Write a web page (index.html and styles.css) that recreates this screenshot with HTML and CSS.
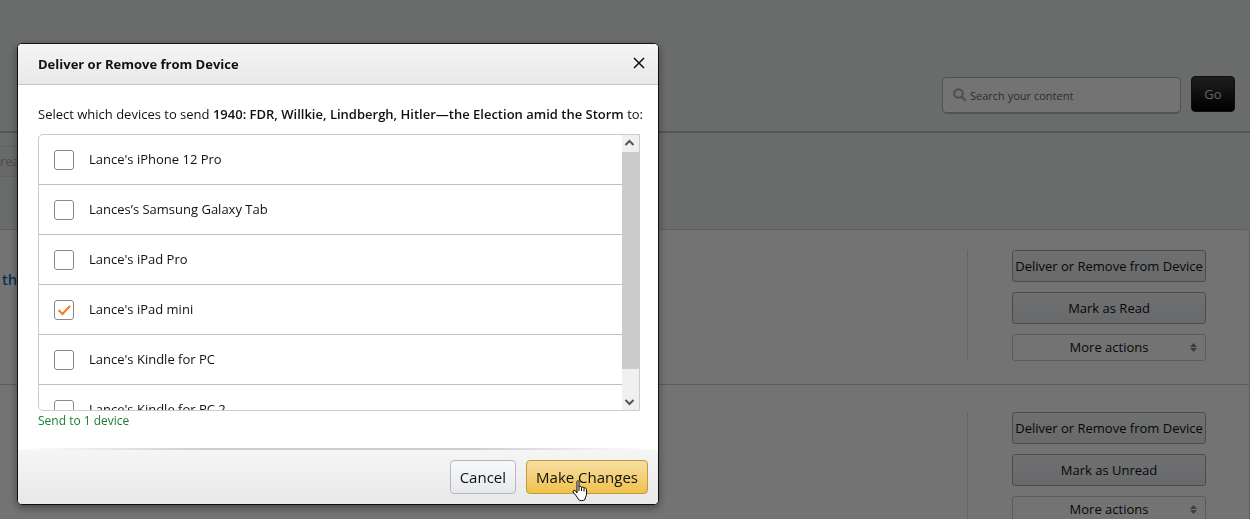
FILE: index.html
```html
<!DOCTYPE html>
<html lang="en">
	<head>
		<meta charset="utf-8">
		<title>Manage Your Content and Devices</title>
		<link rel="stylesheet" href="styles.css">
	</head>
	<body>
		<div class="page">
			<header class="topbar">
				<form class="search">
					<label class="field">
						<svg class="glass" viewBox="0 0 14 14" width="14" height="14"><circle cx="5.5" cy="5.5" r="4.3"/><path d="M8.8 8.8L12.8 12.8"/></svg>
						<input type="search" placeholder="Search your content" aria-label="Search your content">
					</label>
					<button class="go" type="button">Go</button>
				</form>
			</header>
			<div class="filters">
				<button class="filter" type="button">rea</button>
			</div>
			<main class="content">
				<div class="item">
					<a class="book" href="#">th</a>
					<div class="actions">
						<button class="action" type="button">Deliver or Remove from Device</button>
						<button class="action" type="button">Mark as Read</button>
						<label class="more">
							<select aria-label="More actions"><option>More actions</option></select>
							<svg class="updown" viewBox="0 0 7 9" width="7" height="9"><path d="M0 4L3.5 0L7 4zM0 5L3.5 9L7 5z"/></svg>
						</label>
					</div>
				</div>
				<div class="item">
					<div class="actions">
						<button class="action" type="button">Deliver or Remove from Device</button>
						<button class="action" type="button">Mark as Unread</button>
						<label class="more">
							<select aria-label="More actions"><option>More actions</option></select>
							<svg class="updown" viewBox="0 0 7 9" width="7" height="9"><path d="M0 4L3.5 0L7 4zM0 5L3.5 9L7 5z"/></svg>
						</label>
					</div>
				</div>
			</main>
		</div>

		<div class="backdrop">
			<section class="modal" role="dialog" aria-labelledby="modal-title">
				<header class="modal-head">
					<h1 id="modal-title">Deliver or Remove from Device</h1>
					<button class="close" type="button" aria-label="Close">
						<svg viewBox="0 0 12 12" width="12" height="12"><path d="M1 1L11 11M11 1L1 11"/></svg>
					</button>
				</header>
				<div class="modal-body">
					<p class="intro">Select which devices to send <b>1940: FDR, Willkie, Lindbergh, Hitler—the Election amid the Storm</b> to:</p>
					<div class="devices">
						<ul>
							<li><label><input type="checkbox">Lance's iPhone 12 Pro</label></li>
							<li><label><input type="checkbox">Lances’s Samsung Galaxy Tab</label></li>
							<li><label><input type="checkbox">Lance's iPad Pro</label></li>
							<li><label><input type="checkbox" checked>Lance's iPad mini</label></li>
							<li><label><input type="checkbox">Lance's Kindle for PC</label></li>
							<li><label><input type="checkbox">Lance's Kindle for PC 2</label></li>
						</ul>
						<div class="scrollbar">
							<svg viewBox="0 0 17 17" width="17" height="17"><path d="M3.500 10L7.500 6L11.500 10"/></svg>
							<div class="track"><div class="thumb"></div></div>
							<svg viewBox="0 0 17 17" width="17" height="17"><path d="M3.500 7L7.500 11L11.500 7"/></svg>
						</div>
					</div>
					<p class="status">Send to 1 device</p>
				</div>
				<footer class="modal-foot">
					<button class="btn" type="button">Cancel</button>
					<button class="btn primary" type="button">Make Changes
						<svg class="hand" viewBox="0 0 17 22" width="17" height="22"><path d="M5 1.500C5 .5 7 .5 7 1.500V7C7 6 9.500 6 9.500 7.500C10 6.700 12 7 12 8.300C12.500 7.500 14.500 8 14.500 9.500V14C14.500 16 13 17.500 13 19.500C11 21 8 21 6.500 19.500C5.500 17 3 14.500 1 12C.6 10.500 2.500 10 3.500 10.800L5 13z"/><path d="M7 7V11M9.500 7.500V11M12 8.500V11.500"/></svg>
					</button>
				</footer>
			</section>
		</div>
	</body>
</html>
```

FILE: styles.css
```css
*
{
	box-sizing: border-box;
}
body
{
	margin: 0;
	font: 13px/19px "Open Sans", "Noto Sans", sans-serif;
	color: #111;
	background: #fff;
}
button, input, select
{
	font: inherit;
	color: inherit;
}
svg
{
	display: block;
	fill: none;
}
.page
{
	height: 100vh;
	overflow: hidden;
	background: #eaeded;
}
.topbar
{
	padding: 76px 15px 17px;
	border-bottom: 2px solid #bbbfbf;
}
.search
{
	display: flex;
	align-items: flex-end;
	justify-content: flex-end;
	gap: 10px;
}
.field
{
	display: flex;
	align-items: center;
	gap: 3px;
	width: 239px;
	height: 37px;
	margin-top: 1px;
	padding: 0 10px;
	background: #fff;
	border: 1px solid #b4b8b8;
	border-bottom-width: 2px;
	border-radius: 5px;
}
.field input
{
	flex: 1;
	min-width: 0;
	padding: 0;
	border: 0;
	outline: 0;
	background: none;
	font-size: 11px;
}
.field input::placeholder
{
	color: #666;
}
.glass
{
	stroke: #aaa;
	stroke-width: 2;
}
.go
{
	align-self: flex-start;
	width: 44px;
	height: 36px;
	padding: 0;
	color: #ddd;
	background: linear-gradient(#444, #000);
	border: 1px solid #222;
	border-radius: 4px;
}
.filters
{
	padding: 13px 0 52px;
}
.filter
{
	display: block;
	width: 120px;
	height: 31px;
	padding: 0;
	text-align: left;
	color: #aaa;
	background: linear-gradient(#eaeded, #e2e5e8);
	border: solid #d5d9d9;
	border-width: 1px 0;
}
.content
{
	background: #fff;
	border: 1px solid #cdd2d2;
	border-left: 0;
	border-radius: 0 5px 0 0;
}
.item
{
	display: flex;
	padding: 20px 43px 23px 2px;
	border-bottom: 1px solid #ccc;
}
.item + .item
{
	padding-top: 27px;
}
.book
{
	align-self: flex-start;
	margin-top: 20px;
	font-family: "Noto Sans", sans-serif;
	font-size: 15px;
	font-weight: 500;
	color: #0066c0;
	text-decoration: none;
}
.actions
{
	display: flex;
	flex-direction: column;
	gap: 10px;
	width: 239px;
	margin-left: auto;
	padding-left: 44px;
	border-left: 1px solid #ddd;
}
.action
{
	height: 32px;
	padding: 0;
	white-space: nowrap;
	background: linear-gradient(#f7f8fa, #e7e9ec);
	border: 1px solid #a2a6ac;
	border-radius: 3px;
}
.more
{
	display: grid;
	align-items: center;
}
.more select
{
	grid-area: 1 / 1;
	appearance: none;
	height: 27px;
	padding: 0;
	text-align-last: center;
	background: #fff;
	border: 1px solid #ccc;
	border-radius: 3px;
}
.updown
{
	grid-area: 1 / 1;
	justify-self: end;
	margin-right: 9px;
	fill: #888;
	pointer-events: none;
}

.backdrop
{
	position: fixed;
	inset: 0;
	padding: 43px 17px 14px;
	overflow: hidden;
	background: rgba(0,0,0,.55);
}
.modal
{
	max-width: 642px;
	overflow: hidden;
	background: #fff;
	border: 1px solid #111;
	border-radius: 5px;
	box-shadow: 0 3px 8px rgba(0,0,0,.4);
}
.modal-head
{
	display: flex;
	align-items: center;
	justify-content: space-between;
	height: 41px;
	padding: 0 13px 0 20px;
	background: linear-gradient(#f5f5f5, #e8e8e8);
	border-bottom: 1px solid #c4c4c4;
}
.modal-head h1
{
	margin: 0;
	font-size: 13px;
	line-height: 19px;
}
.close
{
	padding: 0 0 3px;
	background: none;
	border: 0;
}
.close svg
{
	stroke: #111;
	stroke-width: 1.5;
}
.modal-body
{
	padding: 20px 18px 18px 20px;
}
.intro
{
	margin: 0 0 10px;
	white-space: nowrap;
}
.intro b
{
	font-weight: 600;
}
.devices
{
	display: flex;
	height: 277px;
	overflow: hidden;
	border: 1px solid #ccc;
	border-radius: 5px 0 0 5px;
}
.devices ul
{
	flex: 1;
	margin: 0;
	padding: 0;
	overflow: hidden;
	list-style: none;
}
.devices li
{
	border-bottom: 1px solid #c0c0c0;
}
.devices label
{
	display: flex;
	align-items: center;
	gap: 15px;
	height: 49px;
	padding-left: 15px;
}
.devices input
{
	appearance: none;
	width: 20px;
	height: 20px;
	margin: 0;
	background: #fff;
	border: 1px solid #888;
	border-radius: 3px;
}
.devices input:checked
{
	background: url("data:image/svg+xml,%3Csvg xmlns='http://www.w3.org/2000/svg' viewBox='0 0 18 18'%3E%3Cpath d='M3.500 9L7.500 13L15 5' fill='none' stroke='%23f47b20' stroke-width='2'/%3E%3C/svg%3E") center / 18px 18px no-repeat;
}
.scrollbar
{
	display: flex;
	flex-direction: column;
	width: 17px;
	background: #f0f0f0;
}
.scrollbar svg
{
	stroke: #555;
	stroke-width: 2;
}
.track
{
	flex: 1;
}
.thumb
{
	height: 90%;
	background: #cbcbcb;
}
.status
{
	margin: 0;
	font-size: 12px;
	color: #1a7f37;
}
.modal-foot
{
	display: flex;
	justify-content: flex-end;
	gap: 10px;
	padding: 12px 10px 10px;
	background: linear-gradient(90deg, #fff, #ccc 30%, #ccc 70%, #fff) top / 100% 2px no-repeat, linear-gradient(#f6f6f6, #e8e8e8);
}
.btn
{
	position: relative;
	height: 34px;
	padding: 0 9px;
	font-size: 15px;
	background: linear-gradient(#f7f8fa, #e7e9ec);
	border: 1px solid #b5b9bf;
	border-radius: 4px;
}
.primary
{
	background: linear-gradient(#f7dfa5, #f0c14b);
	border-color: #c09a3c;
}
.hand
{
	position: absolute;
	left: 45px;
	top: 19px;
	fill: #fff;
	stroke: #000;
	pointer-events: none;
}
```
